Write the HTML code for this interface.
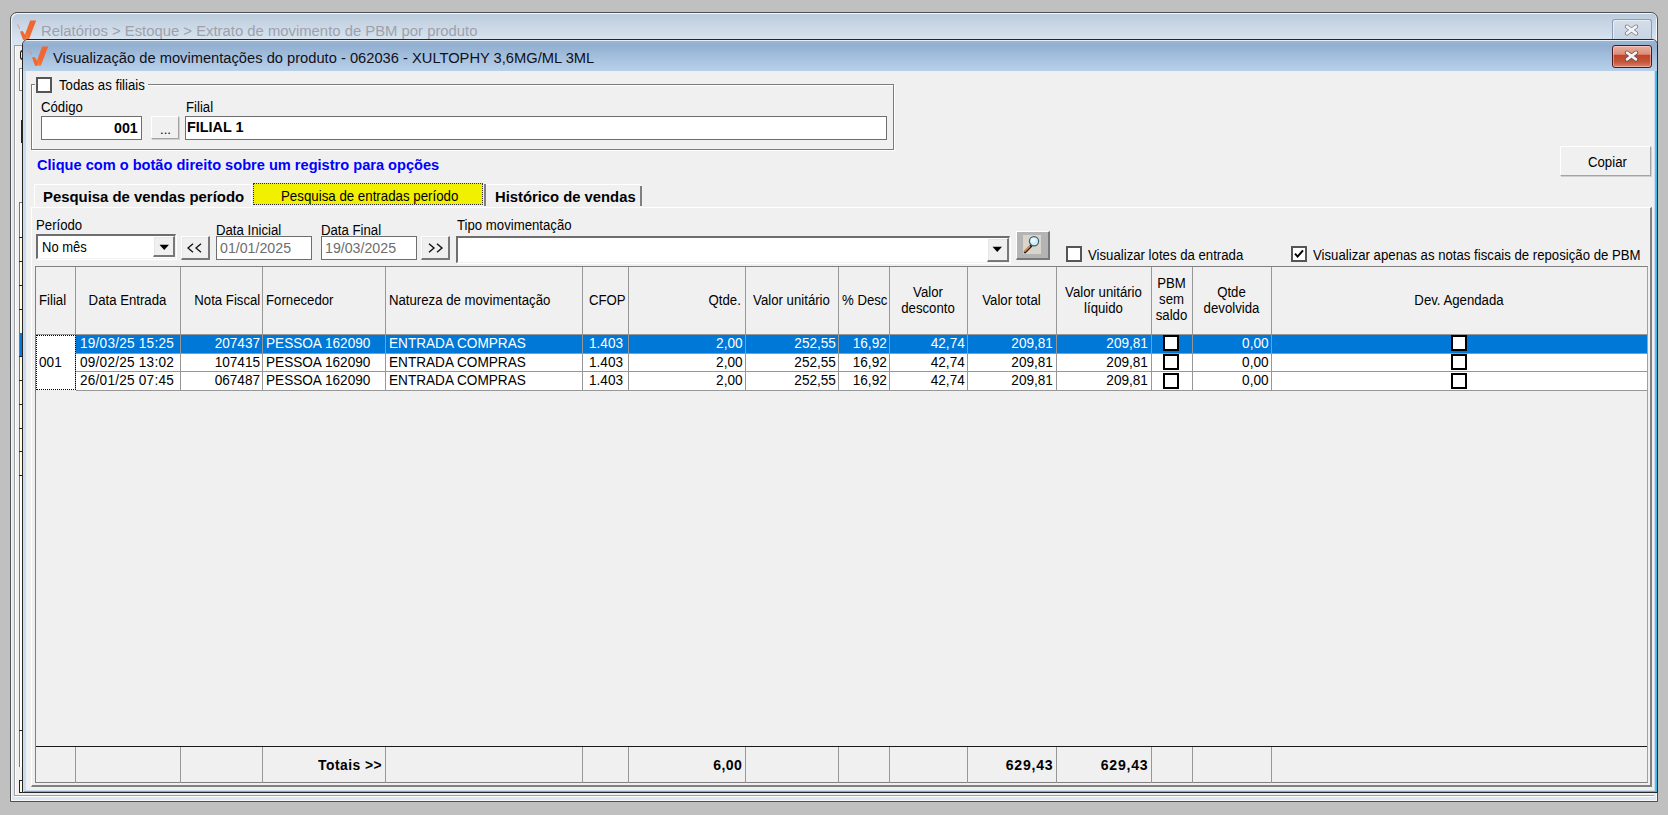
<!DOCTYPE html>
<html><head><meta charset="utf-8">
<style>
*{box-sizing:border-box;margin:0;padding:0}
html,body{width:1668px;height:815px;overflow:hidden;background:#c0c0c0;font-family:"Liberation Sans",sans-serif;font-size:13.2px;color:#000}
.a{position:absolute}
.t{position:absolute;white-space:nowrap;line-height:1}
.b{font-weight:bold}
#ow{left:10px;top:12px;width:1648px;height:790px;border:1px solid #4a4a4a;border-radius:6px 6px 0 0;background:linear-gradient(#c3d3e4,#d9e5f2 30px,#dde8f4);}
#ow:before{content:"";position:absolute;left:0;top:0;right:0;bottom:0;border:1px solid #f4f8fc;border-radius:5px 5px 0 0}
#iw{left:22px;top:39px;width:1636px;height:754px;border:1px solid #3a3a3a;border-radius:6px 6px 0 0;background:#f0f0f0;overflow:hidden}
#itb{left:0;top:0;right:0;height:31px;background:linear-gradient(#95b2d4,#b5cde8)}
.btn{position:absolute;background:#f0f0f0;border:1px solid #fff;border-right-color:#a4a4a4;border-bottom-color:#a4a4a4;box-shadow:1px 1px 0 #cfcfcf;text-align:center}
.inp{position:absolute;background:#fff;border:1px solid #6e6e6e}
.sunk{position:absolute;background:#fff;border-top:2px solid #6e6e6e;border-left:2px solid #6e6e6e;border-right:1px solid #f0f0f0;border-bottom:1px solid #f0f0f0;box-shadow:1px 1px 0 #fff}
.r3{position:absolute;background:#f0f0f0;border-top:1px solid #fff;border-left:1px solid #fff;border-right:2px solid #787878;border-bottom:2px solid #787878;box-shadow:inset 1px 1px 0 #e6e6e6}
.cb{position:absolute;width:15px;height:15px;border:2px solid #555;background:#fff}
.g{position:absolute;background:#a0a0a0}
.cell{position:absolute;white-space:nowrap;line-height:1;font-size:13.6px}
</style></head><body>
<!-- outer window -->
<div class="a" style="left:10px;top:12px;width:1648px;height:790px;border:1px solid #4e4e4e;border-radius:7px 7px 0 0;background:linear-gradient(#bccbdb,#d6e3f0 26px,#dce7f3 40px,#dfe9f4);box-shadow:inset 1px 1px 0 #f6f9fc,inset -1px -1px 0 #f6f9fc"></div>
<div class="t" style="left:41px;top:24px;font-size:14.85px;color:#a0a0ab">Relatórios &gt; Estoque &gt; Extrato de movimento de PBM por produto</div>
<div class="a" style="left:1612px;top:19px;width:40px;height:21px;border:1px solid #8d9db6;border-bottom:none;border-radius:3px 3px 0 0;background:linear-gradient(#d4deea,#c6d4e4);box-shadow:inset 1px 1px 0 #e6edf5"></div>
<svg class="a" style="left:16px;top:20px" width="22" height="21" viewBox="0 0 22 21"><defs><linearGradient id="lgo" x1="0" y1="1" x2="1" y2="0"><stop offset="0" stop-color="#f7913a"/><stop offset="0.35" stop-color="#f06a34"/><stop offset="1" stop-color="#ef6433"/></linearGradient></defs><path d="M14.2 0.5 L20.2 0.5 L12.8 19.8 L7 19.8 Z" fill="url(#lgo)"/><path d="M4 11.6 L6.8 10.9 L10 16.4 L8.6 19.8 L7 19.8 Z" fill="url(#lgo)"/><path d="M0.9 4.1 L2.2 4.6 L4.1 8.6 L3.4 9.2 Z" fill="#f0886a" opacity="0.85"/></svg>
<svg class="a" style="left:1623.5px;top:23.5px" width="15" height="12" viewBox="0 0 15 12"><path d="M3 2.6 L12 9.4 M12 2.6 L3 9.4" stroke="#7a7f88" stroke-width="4.2" stroke-linecap="round"/><path d="M3 2.6 L12 9.4 M12 2.6 L3 9.4" stroke="#f4f4f4" stroke-width="2.6" stroke-linecap="round"/></svg>
<!-- left strip of background window -->
<div class="a" style="left:14px;top:45px;width:1640px;height:751px;background:#f0f0f0;border-left:1px solid #a0a0a0;border-top:1px solid #a0a0a0;border-bottom:1px solid #a0a0a0;box-shadow:inset 1px 0 0 #fff,0 1px 0 #fff"></div>
<div class="a" style="left:19px;top:202px;width:3px;height:565px;background:#fff;border-left:1px solid #7a7a7a;border-top:1px solid #7a7a7a"></div>
<div class="a" style="left:20px;top:237px;width:2px;height:238px;background:#fffbe0"></div>
<div class="a" style="left:20px;top:333px;width:2px;height:23px;background:#0078d7"></div>
<div class="a" style="left:19px;top:237px;width:3px;height:1px;background:#222"></div><div class="a" style="left:19px;top:261px;width:3px;height:1px;background:#222"></div><div class="a" style="left:19px;top:285px;width:3px;height:1px;background:#222"></div><div class="a" style="left:19px;top:309px;width:3px;height:1px;background:#222"></div><div class="a" style="left:19px;top:356px;width:3px;height:1px;background:#222"></div><div class="a" style="left:19px;top:380px;width:3px;height:1px;background:#222"></div><div class="a" style="left:19px;top:404px;width:3px;height:1px;background:#222"></div><div class="a" style="left:19px;top:428px;width:3px;height:1px;background:#222"></div><div class="a" style="left:19px;top:451px;width:3px;height:1px;background:#222"></div><div class="a" style="left:19px;top:475px;width:3px;height:1px;background:#222"></div><div class="a" style="left:19px;top:730px;width:3px;height:1px;background:#222"></div>
<div class="a" style="left:19px;top:780px;width:4px;height:13px;background:#fffbe0;border:1px solid #222"></div>
<div class="a" style="left:19px;top:68px;width:4px;height:23px;background:#fff;border:1px solid #8a8a8a"></div>
<div class="a" style="left:21px;top:120px;width:2px;height:23px;background:#222"></div>
<div class="a" style="left:20px;top:50px;width:3px;height:10px;border:1px solid #111;border-right:none;border-radius:3px 0 0 3px"></div>

<!-- inner window -->
<div class="a" style="left:22px;top:39px;width:1636px;height:754px;border:1px solid #262626;border-radius:6px 6px 0 0;background:#cadcf0;overflow:hidden">
  <div class="a" style="left:0;top:0;right:0;height:31px;background:linear-gradient(#9cb6d5,#93b0d1 6px,#a6c1df 18px,#b8d1ea);box-shadow:inset 0 1px 0 #e8eef6"></div>
  <div class="a" style="left:3px;top:31px;width:1628px;height:719px;background:#f0f0f0"></div>
  <div class="a" style="right:0;top:31px;width:2px;height:722px;background:linear-gradient(90deg,#62c6ea,#2fb4e0)"></div>
  <div class="a" style="left:1px;bottom:0;right:0;height:1px;background:#3ec2e4"></div>
</div>
<div class="t" style="left:53px;top:50.5px;font-size:14.7px;color:#10101c">Visualização de movimentações do produto - 062036 - XULTOPHY 3,6MG/ML 3ML</div>
<div class="a" style="left:1612px;top:45px;width:40px;height:23px;border:1px solid #4a1a22;border-radius:3px;background:linear-gradient(#eab0a0,#dc8d78 40%,#bf4328 42%,#c35538 75%,#d8826c);box-shadow:inset 0 0 0 1px rgba(255,220,210,.5)"></div>
<svg class="a" style="left:28px;top:46px" width="22" height="21" viewBox="0 0 22 21"><defs><linearGradient id="lgi" x1="0" y1="1" x2="1" y2="0"><stop offset="0" stop-color="#f7913a"/><stop offset="0.35" stop-color="#f06a34"/><stop offset="1" stop-color="#ef6433"/></linearGradient></defs><path d="M14.2 0.5 L20.2 0.5 L12.8 19.8 L7 19.8 Z" fill="url(#lgi)"/><path d="M4 11.6 L6.8 10.9 L10 16.4 L8.6 19.8 L7 19.8 Z" fill="url(#lgi)"/><path d="M0.9 4.1 L2.2 4.6 L4.1 8.6 L3.4 9.2 Z" fill="#f0886a" opacity="0.85"/></svg>
<svg class="a" style="left:1623.5px;top:49.5px" width="15" height="12" viewBox="0 0 15 12"><path d="M3 2.6 L12 9.4 M12 2.6 L3 9.4" stroke="#6a4a4a" stroke-width="4.2" stroke-linecap="round"/><path d="M3 2.6 L12 9.4 M12 2.6 L3 9.4" stroke="#f4f4f4" stroke-width="2.6" stroke-linecap="round"/></svg>
<!-- group box -->
<div class="a" style="left:31px;top:84px;width:863px;height:66px;border:1px solid #7c7c7c;box-shadow:inset 1px 1px 0 #fff,1px 1px 0 #fff"></div>
<div class="a" style="left:35px;top:76px;width:113px;height:16px;background:#f0f0f0"></div>
<div class="cb" style="left:36px;top:77px;width:16px;height:16px"></div>
<div class="t" style="left:59px;top:78.1px;font-size:14.26px;transform:scaleX(0.9259);transform-origin:0 0">Todas as filiais</div>
<div class="t" style="left:41px;top:100.1px;font-size:14.26px;transform:scaleX(0.9259);transform-origin:0 0">Código</div>
<div class="inp" style="left:41px;top:116px;width:101px;height:24px"></div>
<div class="t b" style="left:114px;top:120.5px;font-size:14.2px">001</div>
<div class="btn" style="left:151px;top:116px;width:28px;height:23px"></div>
<div class="t" style="left:160px;top:122.5px">...</div>
<div class="t" style="left:186px;top:100.1px;font-size:14.26px;transform:scaleX(0.9259);transform-origin:0 0">Filial</div>
<div class="inp" style="left:185px;top:116px;width:702px;height:24px"></div>
<div class="t b" style="left:187px;top:120px;font-size:14.4px">FILIAL 1</div>

<div class="t b" style="left:37px;top:158px;font-size:14.6px;color:#0000ff">Clique com o botão direito sobre um registro para opções</div>
<div class="btn" style="left:1560px;top:146px;width:91px;height:30px"></div>
<div class="t" style="left:1588px;top:155.1px;font-size:14.26px;transform:scaleX(0.9259);transform-origin:0 0">Copiar</div>

<!-- tabs -->
<div class="a" style="left:34px;top:184px;width:218px;height:23px;background:#f0f0f0;border-top:1px solid #fff;border-left:1px solid #fff;border-right:1px solid #fff"></div>
<div class="t b" style="left:43px;top:190px;font-size:14.9px">Pesquisa de vendas período</div>
<div class="a" style="left:253px;top:183px;width:230px;height:22px;background:#f0f000;border:1px dotted #333"></div>
<div class="t" style="left:281px;top:189px;font-size:14.36px;transform:scaleX(0.9259);transform-origin:0 0">Pesquisa de entradas período</div>
<div class="a" style="left:484px;top:184px;width:2px;height:22px;background:#808080"></div>
<div class="a" style="left:486px;top:184px;width:155px;height:23px;border-top:1px solid #fff"></div>
<div class="t b" style="left:495px;top:190px;font-size:14.8px">Histórico de vendas</div>
<div class="a" style="left:640px;top:186px;width:2px;height:20px;background:#808080"></div>

<!-- tab page -->
<div class="a" style="left:31px;top:207px;width:1621px;height:580px;border-top:1px solid #fff;border-left:1px solid #fff;border-right:2px solid #808080;border-bottom:2px solid #808080"></div>

<!-- period row -->
<div class="t" style="left:36px;top:218.1px;font-size:14.26px;transform:scaleX(0.9259);transform-origin:0 0">Período</div>
<div class="sunk" style="left:36px;top:234px;width:140px;height:25px"></div>
<div class="t" style="left:42px;top:239.6px;font-size:14.04px;transform:scaleX(0.9259);transform-origin:0 0">No mês</div>
<div class="r3" style="left:153px;top:236px;width:22px;height:21px"></div>
<svg class="a" style="left:159px;top:244px" width="11" height="7"><path d="M0.5 0.8 L10 0.8 L5.25 6 Z" fill="#000"/></svg>
<div class="r3" style="left:181px;top:236px;width:29px;height:24px"></div>
<svg class="a" style="left:186px;top:242px" width="18" height="12"><path d="M7 1.8 L2 6 L7 10.2 M15 1.8 L10 6 L15 10.2" stroke="#111" stroke-width="1.3" fill="none"/></svg>
<div class="t" style="left:216px;top:223.1px;font-size:14.26px;transform:scaleX(0.9259);transform-origin:0 0">Data Inicial</div>
<div class="inp" style="left:216px;top:236px;width:96px;height:24px"></div>
<div class="t" style="left:219.5px;top:240.0px;font-size:15.34px;color:#6d6d6d;transform:scaleX(0.9259);transform-origin:0 0">01/01/2025</div>
<div class="t" style="left:321px;top:223.1px;font-size:14.26px;transform:scaleX(0.9259);transform-origin:0 0">Data Final</div>
<div class="inp" style="left:321px;top:236px;width:96px;height:24px"></div>
<div class="t" style="left:324.5px;top:240.0px;font-size:15.34px;color:#6d6d6d;transform:scaleX(0.9259);transform-origin:0 0">19/03/2025</div>
<div class="r3" style="left:421px;top:236px;width:29px;height:24px"></div>
<svg class="a" style="left:426px;top:242px" width="18" height="12"><path d="M3 1.8 L8 6 L3 10.2 M11 1.8 L16 6 L11 10.2" stroke="#111" stroke-width="1.4" fill="none"/></svg>
<div class="t" style="left:457px;top:218.1px;font-size:14.26px;transform:scaleX(0.9259);transform-origin:0 0">Tipo movimentação</div>
<div class="sunk" style="left:456px;top:236px;width:554px;height:27px"></div>
<div class="r3" style="left:987px;top:238px;width:22px;height:24px"></div>
<svg class="a" style="left:992px;top:246px" width="11" height="7"><path d="M0.5 0.8 L10 0.8 L5.25 6 Z" fill="#000"/></svg>
<div class="r3" style="left:1016px;top:231px;width:34px;height:29px;background:#b4b4b4;box-shadow:none"></div>
<div class="a" style="left:1023px;top:235px;width:18px;height:19px;background:#d9d4cc"></div>
<svg class="a" style="left:1023px;top:235px" width="18" height="19" viewBox="0 0 18 19"><path d="M2 17 L8 11" stroke="#222" stroke-width="2.6" stroke-linecap="round"/><path d="M1.8 16.2 L6.5 11.5" stroke="#f58a3c" stroke-width="1.6" stroke-linecap="round"/><circle cx="11" cy="6.2" r="4.6" fill="#c9efff" stroke="#4a5a66" stroke-width="1.2"/><circle cx="10.2" cy="5.4" r="2.4" fill="#e8f9ff"/></svg>
<div class="cb" style="left:1066px;top:246px;width:16px;height:16px"></div>
<div class="t" style="left:1088px;top:248.1px;font-size:14.26px;transform:scaleX(0.9259);transform-origin:0 0">Visualizar lotes da entrada</div>
<div class="cb" style="left:1291px;top:246px;width:16px;height:16px"></div>
<svg class="a" style="left:1293px;top:248px" width="12" height="12"><path d="M2 5.6 L4.6 8.6 L10 2.4" stroke="#000" stroke-width="2" fill="none"/></svg>
<div class="t" style="left:1313px;top:248.1px;font-size:14.26px;transform:scaleX(0.9259);transform-origin:0 0">Visualizar apenas as notas fiscais de reposição de PBM</div>

<!-- grid -->
<div class="a" style="left:35px;top:266px;width:1613px;height:517px;border:1px solid #808080;border-right-color:#a0a0a0;background:#f0f0f0"></div>
<!-- GRID START -->
<div class="a" style="left:75px;top:267px;width:1px;height:67px;background:#979797"></div>
<div class="a" style="left:180px;top:267px;width:1px;height:67px;background:#979797"></div>
<div class="a" style="left:262px;top:267px;width:1px;height:67px;background:#979797"></div>
<div class="a" style="left:385px;top:267px;width:1px;height:67px;background:#979797"></div>
<div class="a" style="left:582px;top:267px;width:1px;height:67px;background:#979797"></div>
<div class="a" style="left:628px;top:267px;width:1px;height:67px;background:#979797"></div>
<div class="a" style="left:745px;top:267px;width:1px;height:67px;background:#979797"></div>
<div class="a" style="left:838px;top:267px;width:1px;height:67px;background:#979797"></div>
<div class="a" style="left:889px;top:267px;width:1px;height:67px;background:#979797"></div>
<div class="a" style="left:967px;top:267px;width:1px;height:67px;background:#979797"></div>
<div class="a" style="left:1056px;top:267px;width:1px;height:67px;background:#979797"></div>
<div class="a" style="left:1151px;top:267px;width:1px;height:67px;background:#979797"></div>
<div class="a" style="left:1192px;top:267px;width:1px;height:67px;background:#979797"></div>
<div class="a" style="left:1271px;top:267px;width:1px;height:67px;background:#979797"></div>
<div class="a" style="left:36px;top:334px;width:1611px;height:1px;background:#979797"></div>
<div class="a" style="left:36px;top:335px;width:1611px;height:55px;background:#fff"></div>
<div class="a" style="left:76px;top:335px;width:1571px;height:18px;background:#0078d7"></div>
<div class="a" style="left:76px;top:353px;width:1571px;height:1px;background:#979797"></div>
<div class="a" style="left:76px;top:371px;width:1571px;height:1px;background:#979797"></div>
<div class="a" style="left:76px;top:390px;width:1571px;height:1px;background:#979797"></div>
<div class="a" style="left:75px;top:334px;width:1px;height:56px;background:#979797"></div>
<div class="a" style="left:180px;top:334px;width:1px;height:56px;background:#979797"></div>
<div class="a" style="left:262px;top:334px;width:1px;height:56px;background:#979797"></div>
<div class="a" style="left:385px;top:334px;width:1px;height:56px;background:#979797"></div>
<div class="a" style="left:582px;top:334px;width:1px;height:56px;background:#979797"></div>
<div class="a" style="left:628px;top:334px;width:1px;height:56px;background:#979797"></div>
<div class="a" style="left:745px;top:334px;width:1px;height:56px;background:#979797"></div>
<div class="a" style="left:838px;top:334px;width:1px;height:56px;background:#979797"></div>
<div class="a" style="left:889px;top:334px;width:1px;height:56px;background:#979797"></div>
<div class="a" style="left:967px;top:334px;width:1px;height:56px;background:#979797"></div>
<div class="a" style="left:1056px;top:334px;width:1px;height:56px;background:#979797"></div>
<div class="a" style="left:1151px;top:334px;width:1px;height:56px;background:#979797"></div>
<div class="a" style="left:1192px;top:334px;width:1px;height:56px;background:#979797"></div>
<div class="a" style="left:1271px;top:334px;width:1px;height:56px;background:#979797"></div>
<div class="a" style="left:36px;top:335px;width:40px;height:55px;border:1px dotted #000"></div>
<div class="cell" style="left:39px;top:292.6px;font-size:14.26px;color:#000;transform:scaleX(0.9259);transform-origin:0 0">Filial</div>
<div class="cell" style="left:75px;width:105px;text-align:center;top:292.6px;font-size:14.26px;color:#000;transform:scaleX(0.9259);transform-origin:50% 0">Data Entrada</div>
<div class="cell" style="right:1408px;top:292.6px;font-size:14.26px;color:#000;transform:scaleX(0.9259);transform-origin:100% 0">Nota Fiscal</div>
<div class="cell" style="left:266px;top:292.6px;font-size:14.26px;color:#000;transform:scaleX(0.9259);transform-origin:0 0">Fornecedor</div>
<div class="cell" style="left:389px;top:292.6px;font-size:14.26px;color:#000;transform:scaleX(0.9259);transform-origin:0 0">Natureza de movimentação</div>
<div class="cell" style="left:589px;top:292.6px;font-size:14.26px;color:#000;transform:scaleX(0.9259);transform-origin:0 0">CFOP</div>
<div class="cell" style="right:927px;top:292.6px;font-size:14.26px;color:#000;transform:scaleX(0.9259);transform-origin:100% 0">Qtde.</div>
<div class="cell" style="left:745px;width:93px;text-align:center;top:292.6px;font-size:14.26px;color:#000;transform:scaleX(0.9259);transform-origin:50% 0">Valor unitário</div>
<div class="cell" style="left:842px;top:292.6px;font-size:14.26px;color:#000;transform:scaleX(0.9259);transform-origin:0 0">% Desc</div>
<div class="cell" style="left:889px;width:78px;text-align:center;top:284.9px;font-size:14.26px;color:#000;transform:scaleX(0.9259);transform-origin:50% 0">Valor</div>
<div class="cell" style="left:889px;width:78px;text-align:center;top:301.2px;font-size:14.26px;color:#000;transform:scaleX(0.9259);transform-origin:50% 0">desconto</div>
<div class="cell" style="left:967px;width:89px;text-align:center;top:292.6px;font-size:14.26px;color:#000;transform:scaleX(0.9259);transform-origin:50% 0">Valor total</div>
<div class="cell" style="left:1056px;width:95px;text-align:center;top:284.9px;font-size:14.26px;color:#000;transform:scaleX(0.9259);transform-origin:50% 0">Valor unitário</div>
<div class="cell" style="left:1056px;width:95px;text-align:center;top:301.2px;font-size:14.26px;color:#000;transform:scaleX(0.9259);transform-origin:50% 0">líquido</div>
<div class="cell" style="left:1151px;width:41px;text-align:center;top:275.9px;font-size:14.26px;color:#000;transform:scaleX(0.9259);transform-origin:50% 0">PBM</div>
<div class="cell" style="left:1151px;width:41px;text-align:center;top:292.2px;font-size:14.26px;color:#000;transform:scaleX(0.9259);transform-origin:50% 0">sem</div>
<div class="cell" style="left:1151px;width:41px;text-align:center;top:308.4px;font-size:14.26px;color:#000;transform:scaleX(0.9259);transform-origin:50% 0">saldo</div>
<div class="cell" style="left:1192px;width:79px;text-align:center;top:284.9px;font-size:14.26px;color:#000;transform:scaleX(0.9259);transform-origin:50% 0">Qtde</div>
<div class="cell" style="left:1192px;width:79px;text-align:center;top:301.2px;font-size:14.26px;color:#000;transform:scaleX(0.9259);transform-origin:50% 0">devolvida</div>
<div class="cell" style="left:1271px;width:376px;text-align:center;top:292.6px;font-size:14.26px;color:#000;transform:scaleX(0.9259);transform-origin:50% 0">Dev. Agendada</div>
<div class="cell" style="left:39px;top:354.6px;font-size:14.69px;color:#000;transform:scaleX(0.9259);transform-origin:0 0">001</div>
<div class="cell" style="left:80px;top:335.8px;font-size:14.69px;color:#fff;transform:scaleX(0.9259);transform-origin:0 0;letter-spacing:0.25px">19/03/25 15:25</div>
<div class="cell" style="right:1408px;top:335.8px;font-size:14.69px;color:#fff;transform:scaleX(0.9259);transform-origin:100% 0">207437</div>
<div class="cell" style="left:266px;top:335.8px;font-size:14.69px;color:#fff;transform:scaleX(0.9259);transform-origin:0 0">PESSOA 162090</div>
<div class="cell" style="left:389px;top:335.8px;font-size:14.69px;color:#fff;transform:scaleX(0.9259);transform-origin:0 0">ENTRADA COMPRAS</div>
<div class="cell" style="left:589px;top:335.8px;font-size:14.69px;color:#fff;transform:scaleX(0.9259);transform-origin:0 0">1.403</div>
<div class="cell" style="right:925px;top:335.8px;font-size:14.69px;color:#fff;transform:scaleX(0.9259);transform-origin:100% 0">2,00</div>
<div class="cell" style="right:832px;top:335.8px;font-size:14.69px;color:#fff;transform:scaleX(0.9259);transform-origin:100% 0">252,55</div>
<div class="cell" style="right:781px;top:335.8px;font-size:14.69px;color:#fff;transform:scaleX(0.9259);transform-origin:100% 0">16,92</div>
<div class="cell" style="right:703px;top:335.8px;font-size:14.69px;color:#fff;transform:scaleX(0.9259);transform-origin:100% 0">42,74</div>
<div class="cell" style="right:615px;top:335.8px;font-size:14.69px;color:#fff;transform:scaleX(0.9259);transform-origin:100% 0">209,81</div>
<div class="cell" style="right:520px;top:335.8px;font-size:14.69px;color:#fff;transform:scaleX(0.9259);transform-origin:100% 0">209,81</div>
<div class="cell" style="right:399px;top:335.8px;font-size:14.69px;color:#fff;transform:scaleX(0.9259);transform-origin:100% 0">0,00</div>
<div class="a" style="left:1163px;top:335px;width:16px;height:16px;border:2px solid #000;background:#fff"></div>
<div class="a" style="left:1451px;top:335px;width:16px;height:16px;border:2px solid #000;background:#fff"></div>
<div class="cell" style="left:80px;top:354.6px;font-size:14.69px;color:#000;transform:scaleX(0.9259);transform-origin:0 0;letter-spacing:0.25px">09/02/25 13:02</div>
<div class="cell" style="right:1408px;top:354.6px;font-size:14.69px;color:#000;transform:scaleX(0.9259);transform-origin:100% 0">107415</div>
<div class="cell" style="left:266px;top:354.6px;font-size:14.69px;color:#000;transform:scaleX(0.9259);transform-origin:0 0">PESSOA 162090</div>
<div class="cell" style="left:389px;top:354.6px;font-size:14.69px;color:#000;transform:scaleX(0.9259);transform-origin:0 0">ENTRADA COMPRAS</div>
<div class="cell" style="left:589px;top:354.6px;font-size:14.69px;color:#000;transform:scaleX(0.9259);transform-origin:0 0">1.403</div>
<div class="cell" style="right:925px;top:354.6px;font-size:14.69px;color:#000;transform:scaleX(0.9259);transform-origin:100% 0">2,00</div>
<div class="cell" style="right:832px;top:354.6px;font-size:14.69px;color:#000;transform:scaleX(0.9259);transform-origin:100% 0">252,55</div>
<div class="cell" style="right:781px;top:354.6px;font-size:14.69px;color:#000;transform:scaleX(0.9259);transform-origin:100% 0">16,92</div>
<div class="cell" style="right:703px;top:354.6px;font-size:14.69px;color:#000;transform:scaleX(0.9259);transform-origin:100% 0">42,74</div>
<div class="cell" style="right:615px;top:354.6px;font-size:14.69px;color:#000;transform:scaleX(0.9259);transform-origin:100% 0">209,81</div>
<div class="cell" style="right:520px;top:354.6px;font-size:14.69px;color:#000;transform:scaleX(0.9259);transform-origin:100% 0">209,81</div>
<div class="cell" style="right:399px;top:354.6px;font-size:14.69px;color:#000;transform:scaleX(0.9259);transform-origin:100% 0">0,00</div>
<div class="a" style="left:1163px;top:354px;width:16px;height:16px;border:2px solid #000;background:#fff"></div>
<div class="a" style="left:1451px;top:354px;width:16px;height:16px;border:2px solid #000;background:#fff"></div>
<div class="cell" style="left:80px;top:373.2px;font-size:14.69px;color:#000;transform:scaleX(0.9259);transform-origin:0 0;letter-spacing:0.25px">26/01/25 07:45</div>
<div class="cell" style="right:1408px;top:373.2px;font-size:14.69px;color:#000;transform:scaleX(0.9259);transform-origin:100% 0">067487</div>
<div class="cell" style="left:266px;top:373.2px;font-size:14.69px;color:#000;transform:scaleX(0.9259);transform-origin:0 0">PESSOA 162090</div>
<div class="cell" style="left:389px;top:373.2px;font-size:14.69px;color:#000;transform:scaleX(0.9259);transform-origin:0 0">ENTRADA COMPRAS</div>
<div class="cell" style="left:589px;top:373.2px;font-size:14.69px;color:#000;transform:scaleX(0.9259);transform-origin:0 0">1.403</div>
<div class="cell" style="right:925px;top:373.2px;font-size:14.69px;color:#000;transform:scaleX(0.9259);transform-origin:100% 0">2,00</div>
<div class="cell" style="right:832px;top:373.2px;font-size:14.69px;color:#000;transform:scaleX(0.9259);transform-origin:100% 0">252,55</div>
<div class="cell" style="right:781px;top:373.2px;font-size:14.69px;color:#000;transform:scaleX(0.9259);transform-origin:100% 0">16,92</div>
<div class="cell" style="right:703px;top:373.2px;font-size:14.69px;color:#000;transform:scaleX(0.9259);transform-origin:100% 0">42,74</div>
<div class="cell" style="right:615px;top:373.2px;font-size:14.69px;color:#000;transform:scaleX(0.9259);transform-origin:100% 0">209,81</div>
<div class="cell" style="right:520px;top:373.2px;font-size:14.69px;color:#000;transform:scaleX(0.9259);transform-origin:100% 0">209,81</div>
<div class="cell" style="right:399px;top:373.2px;font-size:14.69px;color:#000;transform:scaleX(0.9259);transform-origin:100% 0">0,00</div>
<div class="a" style="left:1163px;top:373px;width:16px;height:16px;border:2px solid #000;background:#fff"></div>
<div class="a" style="left:1451px;top:373px;width:16px;height:16px;border:2px solid #000;background:#fff"></div>
<div class="a" style="left:36px;top:746px;width:1611px;height:1px;background:#1a1a1a"></div>
<div class="a" style="left:75px;top:747px;width:1px;height:36px;background:#979797"></div>
<div class="a" style="left:180px;top:747px;width:1px;height:36px;background:#979797"></div>
<div class="a" style="left:262px;top:747px;width:1px;height:36px;background:#979797"></div>
<div class="a" style="left:385px;top:747px;width:1px;height:36px;background:#979797"></div>
<div class="a" style="left:582px;top:747px;width:1px;height:36px;background:#979797"></div>
<div class="a" style="left:628px;top:747px;width:1px;height:36px;background:#979797"></div>
<div class="a" style="left:745px;top:747px;width:1px;height:36px;background:#979797"></div>
<div class="a" style="left:838px;top:747px;width:1px;height:36px;background:#979797"></div>
<div class="a" style="left:889px;top:747px;width:1px;height:36px;background:#979797"></div>
<div class="a" style="left:967px;top:747px;width:1px;height:36px;background:#979797"></div>
<div class="a" style="left:1056px;top:747px;width:1px;height:36px;background:#979797"></div>
<div class="a" style="left:1151px;top:747px;width:1px;height:36px;background:#979797"></div>
<div class="a" style="left:1192px;top:747px;width:1px;height:36px;background:#979797"></div>
<div class="a" style="left:1271px;top:747px;width:1px;height:36px;background:#979797"></div>
<div class="cell" style="right:1286px;top:757.0px;font-size:14.98px;color:#000;transform:scaleX(0.9259);transform-origin:100% 0;font-weight:bold;letter-spacing:0.5px">Totais &gt;&gt;</div>
<div class="cell" style="right:926px;top:757.1px;font-size:15.20px;color:#000;transform:scaleX(0.9259);transform-origin:100% 0;font-weight:bold;letter-spacing:0.4px">6,00</div>
<div class="cell" style="right:615px;top:757.1px;font-size:15.20px;color:#000;transform:scaleX(0.9259);transform-origin:100% 0;font-weight:bold;letter-spacing:0.8px">629,43</div>
<div class="cell" style="right:520px;top:757.1px;font-size:15.20px;color:#000;transform:scaleX(0.9259);transform-origin:100% 0;font-weight:bold;letter-spacing:0.8px">629,43</div>
<!-- GRID END -->
</body></html>
